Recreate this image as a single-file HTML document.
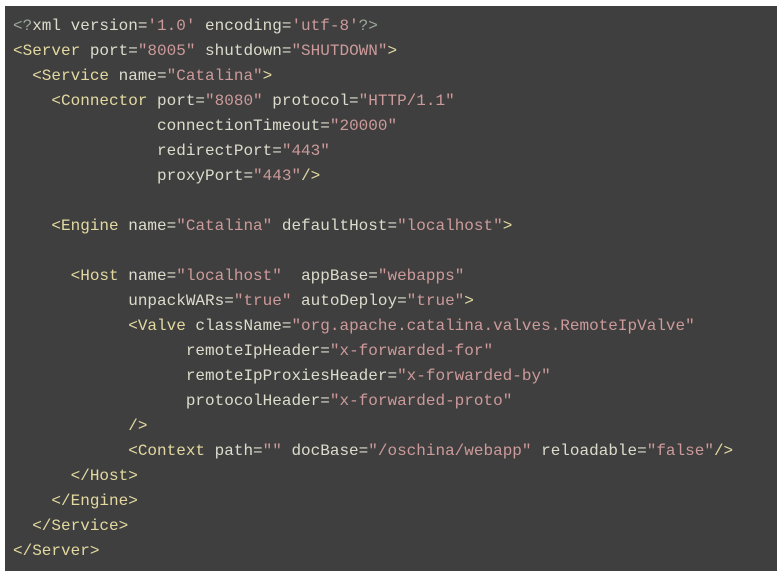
<!DOCTYPE html>
<html><head><meta charset="utf-8"><style>
html,body{margin:0;padding:0;background:#fff;width:782px;height:578px;overflow:hidden}
pre{position:absolute;left:5px;top:6px;width:772px;height:565px;margin:0;box-sizing:border-box;background:#3f3f3f;color:#dcdccc;
font-family:"Liberation Mono",monospace;font-size:16px;line-height:25px;padding:8px 0 0 8px;white-space:pre}
.t{color:#e3d9a0}.s{color:#cc9a9a}.p{color:#9aa89a}
</style></head><body><pre><span class="p">&lt;?</span>xml version=<span class="s">'1.0'</span> encoding=<span class="s">'utf-8'</span><span class="p">?&gt;</span>
<span class="t">&lt;Server</span> port=<span class="s">"8005"</span> shutdown=<span class="s">"SHUTDOWN"</span><span class="t">&gt;</span>
  <span class="t">&lt;Service</span> name=<span class="s">"Catalina"</span><span class="t">&gt;</span>
    <span class="t">&lt;Connector</span> port=<span class="s">"8080"</span> protocol=<span class="s">"HTTP/1.1"</span>
               connectionTimeout=<span class="s">"20000"</span>
               redirectPort=<span class="s">"443"</span>
               proxyPort=<span class="s">"443"</span><span class="t">/&gt;</span>

    <span class="t">&lt;Engine</span> name=<span class="s">"Catalina"</span> defaultHost=<span class="s">"localhost"</span><span class="t">&gt;</span>

      <span class="t">&lt;Host</span> name=<span class="s">"localhost"</span>  appBase=<span class="s">"webapps"</span>
            unpackWARs=<span class="s">"true"</span> autoDeploy=<span class="s">"true"</span><span class="t">&gt;</span>
            <span class="t">&lt;Valve</span> className=<span class="s">"org.apache.catalina.valves.RemoteIpValve"</span>
                  remoteIpHeader=<span class="s">"x-forwarded-for"</span>
                  remoteIpProxiesHeader=<span class="s">"x-forwarded-by"</span>
                  protocolHeader=<span class="s">"x-forwarded-proto"</span>
            <span class="t">/&gt;</span>
            <span class="t">&lt;Context</span> path=<span class="s">""</span> docBase=<span class="s">"/oschina/webapp"</span> reloadable=<span class="s">"false"</span><span class="t">/&gt;</span>
      <span class="t">&lt;/Host&gt;</span>
    <span class="t">&lt;/Engine&gt;</span>
  <span class="t">&lt;/Service&gt;</span>
<span class="t">&lt;/Server&gt;</span></pre></body></html>
